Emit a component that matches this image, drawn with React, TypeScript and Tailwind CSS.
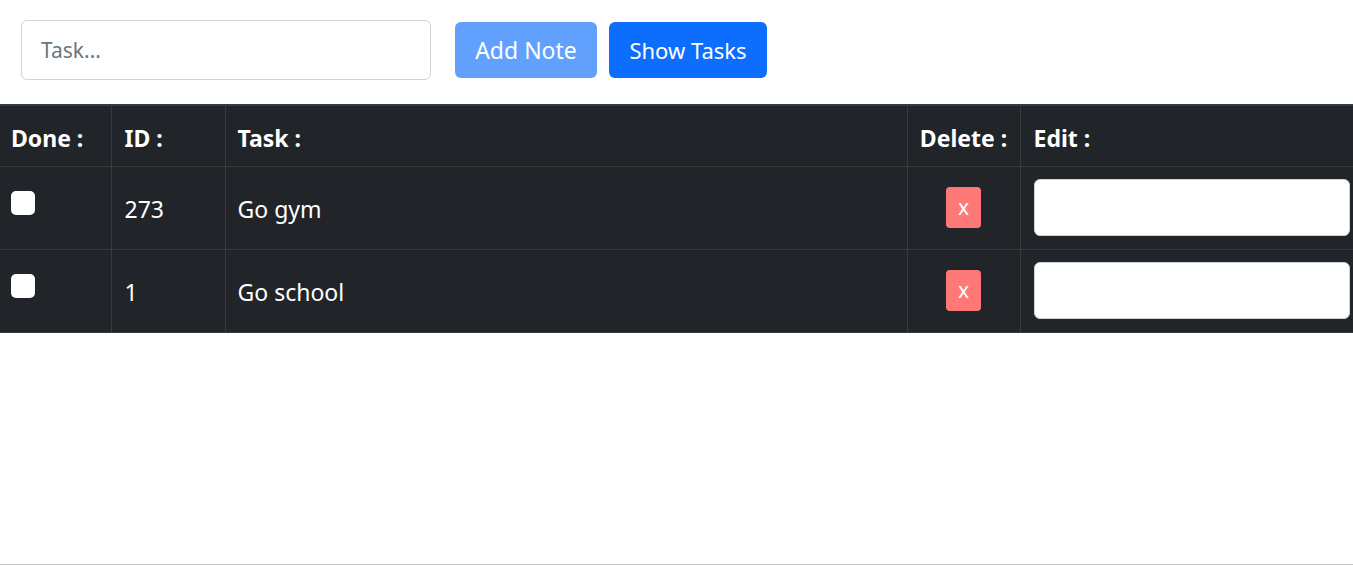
import React, { useState } from "react";

type Tarea = { id: number; text: string; done: boolean };

const TAREAS: Tarea[] = [
  { id: 273, text: "Go gym", done: false },
  { id: 1, text: "Go school", done: false },
];

export default function App() {
  const [task, setTask] = useState("");
  const [tasks, setTasks] = useState(TAREAS);

  const removeTask = (id: number) => setTasks(tasks.filter((t) => t.id !== id));

  return (
    <div className="min-h-[565px] bg-white w-full text-black font-['Noto_Sans',sans-serif] border-b border-[#c6c6c6]">
      {/* Barra de entrada */}
      <div className="flex items-center pt-5 pb-6 pl-[21px]">
        <input
          value={task}
          onChange={(e) => setTask(e.target.value)}
          placeholder="Task..."
          className="w-[410px] h-[60px] px-[19px] text-[21px] border border-[#ced4da] rounded-[6px] outline-none placeholder:text-[#6c757d]"
        />
        <button
          disabled
          className="ml-6 w-[142px] h-14 rounded-[6px] bg-[#62a0fd] text-white text-[23px]"
        >
          Add Note
        </button>
        <button className="ml-3 w-[158px] h-14 rounded-[6px] bg-[#0d6efd] text-white text-[22px]">
          Show Tasks
        </button>
      </div>

      {/* Tabla de tareas */}
      <table className="w-full bg-[#212529] text-white text-[23px] border-collapse border-t-2 border-[#373b3e]">
        <thead>
          <tr className="h-[61px] border-b border-[#373b3e] text-left font-bold">
            <th className="w-[111px] px-[11px] pt-1 border-r border-[#373b3e]">Done :</th>
            <th className="w-[114px] px-[13px] pt-1 border-r border-[#373b3e]">ID :</th>
            <th className="px-[12px] pt-1 border-r border-[#373b3e]">Task :</th>
            <th className="w-[113px] px-[12px] pt-1 border-r border-[#373b3e] text-center">Delete :</th>
            <th className="w-[333px] px-[13px] pt-1">Edit :</th>
          </tr>
        </thead>
        <tbody>
          {tasks.map((t) => (
            <tr key={t.id} className="h-[83px] border-b border-[#373b3e]">
              <td className="px-[11px] pt-6 align-top border-r border-[#373b3e]">
                <span className="block w-6 h-6 bg-white rounded-[5px]" />
              </td>
              <td className="px-[13px] pt-1 border-r border-[#373b3e]">{t.id}</td>
              <td className="px-[12px] pt-1 border-r border-[#373b3e]">{t.text}</td>
              <td className="border-r border-[#373b3e] text-center">
                <button
                  onClick={() => removeTask(t.id)}
                  className="w-[35px] h-[41px] rounded-[4px] bg-[#ff7878] text-white text-[21px] leading-none"
                >
                  x
                </button>
              </td>
              <td className="pl-[13px] pr-[3px]">
                <input className="w-full h-[57px] bg-white rounded-[6px] border border-[#ced4da] outline-none" />
              </td>
            </tr>
          ))}
        </tbody>
      </table>
    </div>
  );
}
